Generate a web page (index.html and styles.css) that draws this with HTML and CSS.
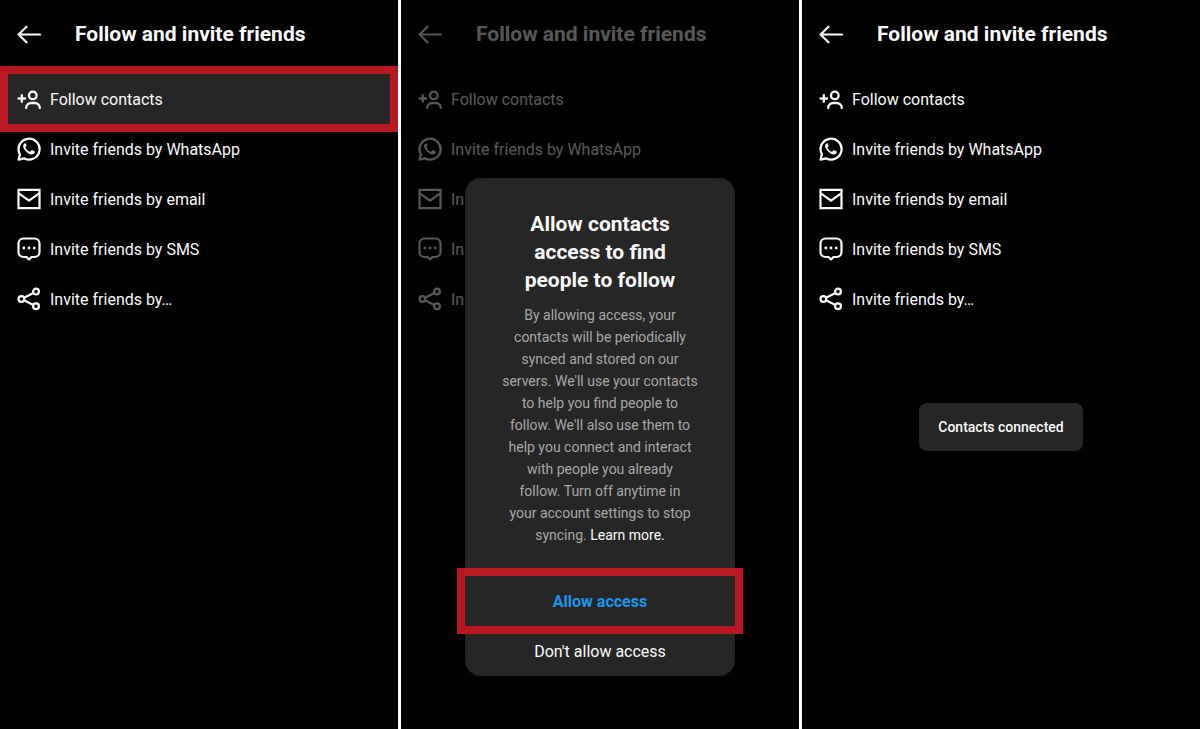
FILE: index.html
```html
<!DOCTYPE html>
<html lang="en">
<head>
  <meta charset="UTF-8">
  <meta name="viewport" content="width=device-width, initial-scale=1">
  <title>Follow and invite friends</title>
  <link rel="stylesheet" href="styles.css">
</head>
<body>
  <!-- Shared icons -->
  <svg class="sprite" aria-hidden="true">
    <symbol id="icon-back" viewBox="0 0 24 24">
      <path d="M23 12.500H1.500M9.500 4.700L1.500 12.500l8 7.800" fill="none" stroke="currentColor" stroke-width="2.200" stroke-linecap="round"/>
    </symbol>
    <symbol id="icon-contacts" viewBox="0 0 24 24">
      <g fill="none" stroke="currentColor" stroke-width="2.300" stroke-linecap="round">
        <circle cx="15.800" cy="8.400" r="3.800"/>
        <path d="M9.200 21v-.4a5 5 0 0 1 5-4.600h3.600a5 5 0 0 1 5 4.600v.4M1.500 11.500h6.600M4.800 8.200v6.600"/>
      </g>
    </symbol>
    <symbol id="icon-whatsapp" viewBox="0 0 24 24">
      <path d="M1.600 22.600l1.300-5.400A10.500 10.500 0 1 1 7 21.300z" fill="none" stroke="currentColor" stroke-width="2.300" stroke-linejoin="round"/>
      <path d="M8.200 6.200c-.4 0-.9.200-1.300.7-1.200 1.300-.9 3.200.1 4.900 1.400 2.500 3.500 4.400 6.200 5.400 1.700.6 3.600.1 4.300-1.200.3-.6.300-1.300.1-1.500-.6-.5-1.700-1-2.500-1.300-.4-.1-.6 0-.9.400l-.8 1c-.2.200-.5.300-.8.100-1.900-.9-3.200-2.200-4.100-3.900-.1-.3 0-.5.200-.7.400-.5.800-.9.900-1.300.1-.3-.6-1.700-.9-2.300-.1-.3-.3-.3-.5-.3z" fill="currentColor"/>
    </symbol>
    <symbol id="icon-email" viewBox="0 0 24 24">
      <path d="M1.500 2.900h21v18.200h-21zM1.500 6.200L12 13.600l10.500-7.400" fill="none" stroke="currentColor" stroke-width="2.200"/>
    </symbol>
    <symbol id="icon-sms" viewBox="0 0 24 24">
      <path d="M6.500 1.500h11a5 5 0 0 1 5 5v8.500a5 5 0 0 1-5 5h-3L12 22.500 9.500 20h-3a5 5 0 0 1-5-5V6.500a5 5 0 0 1 5-5z" fill="none" stroke="currentColor" stroke-width="2.200" stroke-linejoin="round"/>
      <g fill="currentColor">
        <circle cx="6.800" cy="11" r="1.400"/>
        <circle cx="12" cy="11" r="1.400"/>
        <circle cx="17.200" cy="11" r="1.400"/>
      </g>
    </symbol>
    <symbol id="icon-share" viewBox="0 0 24 24">
      <g fill="none" stroke="currentColor" stroke-width="2.200">
        <circle cx="4.400" cy="12" r="2.900"/>
        <circle cx="19" cy="4.600" r="2.900"/>
        <circle cx="19" cy="19.200" r="2.900"/>
        <path d="M7 10.700L16.400 5.900M7 13.300l9.400 4.600"/>
      </g>
    </symbol>
  </svg>

  <main class="screens">
    <!-- Step 1: pick "Follow contacts" -->
    <section class="screen">
      <header class="header">
        <button class="back" type="button" aria-label="Back"><svg class="icon"><use href="#icon-back"/></svg></button>
        <h1 class="title">Follow and invite friends</h1>
      </header>
      <nav class="options">
        <button class="option marked" type="button"><svg class="icon"><use href="#icon-contacts"/></svg>Follow contacts</button>
        <button class="option" type="button"><svg class="icon"><use href="#icon-whatsapp"/></svg>Invite friends by WhatsApp</button>
        <button class="option" type="button"><svg class="icon"><use href="#icon-email"/></svg>Invite friends by email</button>
        <button class="option" type="button"><svg class="icon"><use href="#icon-sms"/></svg>Invite friends by SMS</button>
        <button class="option" type="button"><svg class="icon"><use href="#icon-share"/></svg>Invite friends by…</button>
      </nav>
    </section>

    <!-- Step 2: permission dialog -->
    <section class="screen">
      <header class="header">
        <button class="back" type="button" aria-label="Back"><svg class="icon"><use href="#icon-back"/></svg></button>
        <h1 class="title">Follow and invite friends</h1>
      </header>
      <nav class="options">
        <button class="option" type="button"><svg class="icon"><use href="#icon-contacts"/></svg>Follow contacts</button>
        <button class="option" type="button"><svg class="icon"><use href="#icon-whatsapp"/></svg>Invite friends by WhatsApp</button>
        <button class="option" type="button"><svg class="icon"><use href="#icon-email"/></svg>In</button>
        <button class="option" type="button"><svg class="icon"><use href="#icon-sms"/></svg>In</button>
        <button class="option" type="button"><svg class="icon"><use href="#icon-share"/></svg>In</button>
      </nav>
      <div class="overlay backdrop">
        <div class="dialog" role="dialog" aria-labelledby="dialog-title">
          <h2 class="dialog-title" id="dialog-title">Allow contacts<br>access to find<br>people to follow</h2>
          <p class="dialog-text">
            By allowing access, your<br>
            contacts will be periodically<br>
            synced and stored on our<br>
            servers. We'll use your contacts<br>
            to help you find people to<br>
            follow. We'll also use them to<br>
            help you connect and interact<br>
            with people you already<br>
            follow. Turn off anytime in<br>
            your account settings to stop<br>
            syncing. <a class="learn-more" href="#">Learn more.</a>
          </p>
          <button class="action primary marked" type="button">Allow access</button>
          <button class="action" type="button">Don't allow access</button>
        </div>
      </div>
    </section>

    <!-- Step 3: confirmation -->
    <section class="screen">
      <header class="header">
        <button class="back" type="button" aria-label="Back"><svg class="icon"><use href="#icon-back"/></svg></button>
        <h1 class="title">Follow and invite friends</h1>
      </header>
      <nav class="options">
        <button class="option" type="button"><svg class="icon"><use href="#icon-contacts"/></svg>Follow contacts</button>
        <button class="option" type="button"><svg class="icon"><use href="#icon-whatsapp"/></svg>Invite friends by WhatsApp</button>
        <button class="option" type="button"><svg class="icon"><use href="#icon-email"/></svg>Invite friends by email</button>
        <button class="option" type="button"><svg class="icon"><use href="#icon-sms"/></svg>Invite friends by SMS</button>
        <button class="option" type="button"><svg class="icon"><use href="#icon-share"/></svg>Invite friends by…</button>
      </nav>
      <div class="overlay">
        <div class="toast" role="status">Contacts connected</div>
      </div>
    </section>
  </main>
</body>
</html>
```

FILE: styles.css
```css
* {
  box-sizing: border-box;
}
body {
  margin: 0;
  background-color: #fff;
  color: #fafafa;
  font-family: Roboto, "Liberation Sans", sans-serif;
}
button {
  margin: 0;
  padding: 0;
  border: none;
  background: none;
  color: inherit;
  font-family: inherit;
  cursor: pointer;
}
.sprite {
  position: absolute;
  width: 0;
  height: 0;
}
.screens {
  display: grid;
  grid-template-columns: repeat(3, 1fr);
  gap: 3px;
  min-height: 100vh;
}
.screen {
  position: relative;
  background-color: #000;
}

/* Header and list */
.header {
  display: flex;
  align-items: center;
  gap: 34px;
  height: 68px;
  margin-bottom: 6px;
  padding-left: 17px;
}
.icon {
  display: block;
  flex: none;
  width: 24px;
  height: 24px;
}
.title {
  margin: 0;
  font-size: 21px;
  font-weight: 700;
  line-height: 28px;
}
.options {
  display: flex;
  flex-direction: column;
}
.option {
  display: flex;
  align-items: center;
  gap: 9px;
  height: 50px;
  padding-left: 17px;
  font-size: 16px;
  text-align: left;
}

/* Red frame around the control to tap */
.marked {
  position: relative;
  background-color: #262626;
}
.marked::after {
  content: "";
  position: absolute;
  inset: -8px 0;
  border: 8px solid #b8181f;
}
.action.marked::after {
  inset: -8px;
}

/* Dialog and toast */
.overlay {
  position: absolute;
  inset: 0;
  display: flex;
  align-items: center;
  justify-content: center;
  padding-top: 125px;
}
.backdrop {
  background-color: rgba(0, 0, 0, 0.65);
}
.dialog {
  display: flex;
  flex-direction: column;
  width: 270px;
  padding-top: 32px;
  border-radius: 16px;
  background-color: #262626;
  text-align: center;
}
.dialog-title {
  margin: 0 0 10px;
  font-size: 21px;
  font-weight: 700;
  line-height: 28px;
}
.dialog-text {
  margin: 0 0 30px;
  color: #a8a8a8;
  font-size: 14px;
  line-height: 22px;
}
.learn-more {
  color: #fafafa;
  text-decoration: none;
}
.action {
  height: 50px;
  font-size: 16px;
}
.primary {
  color: #1c96ec;
  font-weight: 700;
}
.toast {
  padding: 14px 19px;
  border-radius: 8px;
  background-color: #262626;
  font-size: 14px;
  font-weight: 500;
  line-height: 20px;
}
```
